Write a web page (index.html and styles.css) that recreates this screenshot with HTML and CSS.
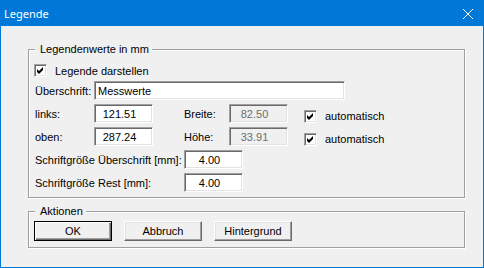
FILE: index.html
```html
<!DOCTYPE html>
<html>
<head>
  <meta charset="UTF-8">
  <meta name="viewport" content="width=device-width, initial-scale=1">
  <title>Legende</title>
  <link rel="stylesheet" href="styles.css">
</head>
<body>
  <div class="window">
    <div class="titlebar">
      <span class="caption">Legende</span>
      <svg class="close" width="10" height="10" viewBox="0 0 10 10"><path d="M0 0L10 10M10 0L0 10" stroke="#fff" stroke-width="1"/></svg>
    </div>
    <div class="client">
      <fieldset class="group values">
        <legend>Legendenwerte in mm</legend>
        <div class="rows">
          <div class="check-row">
            <span class="box"><svg width="9" height="9" viewBox="0 0 9 9"><path d="M1 3L3 5L7 1L7 4L3 8L1 6Z" fill="#000"/></svg></span>
            <span>Legende darstellen</span>
          </div>
          <div class="row">
            <span class="lbl">Überschrift:</span>
            <input class="edit wide" type="text" value="Messwerte">
          </div>
          <div class="row">
            <span class="lbl">links:</span>
            <input class="edit" type="text" value="121.51">
            <span class="lbl dim">Breite:</span>
            <input class="edit off" type="text" value="82.50" readonly>
            <span class="auto">
              <span class="box"><svg width="9" height="9" viewBox="0 0 9 9"><path d="M1 3L3 5L7 1L7 4L3 8L1 6Z" fill="#000"/></svg></span>
              <span>automatisch</span>
            </span>
          </div>
          <div class="row">
            <span class="lbl">oben:</span>
            <input class="edit" type="text" value="287.24">
            <span class="lbl dim">Höhe:</span>
            <input class="edit off" type="text" value="33.91" readonly>
            <span class="auto">
              <span class="box"><svg width="9" height="9" viewBox="0 0 9 9"><path d="M1 3L3 5L7 1L7 4L3 8L1 6Z" fill="#000"/></svg></span>
              <span>automatisch</span>
            </span>
          </div>
          <div class="row">
            <span class="lbl long">Schriftgröße Überschrift [mm]:</span>
            <input class="edit" type="text" value="4.00">
          </div>
          <div class="row">
            <span class="lbl long">Schriftgröße Rest [mm]:</span>
            <input class="edit" type="text" value="4.00">
          </div>
        </div>
      </fieldset>
      <fieldset class="group actions">
        <legend>Aktionen</legend>
        <div class="buttons">
          <button class="btn default">OK</button>
          <button class="btn">Abbruch</button>
          <button class="btn">Hintergrund</button>
        </div>
      </fieldset>
    </div>
  </div>
</body>
</html>
```

FILE: styles.css
```css
body {
  margin: 0;
  font-family: "Liberation Sans", Arial, sans-serif;
  font-size: 11px;
  color: #000000;
}
.window {
  width: 484px;
  height: 268px;
  box-sizing: border-box;
  border: 1px solid #0078d7;
  background: #f0f0f0;
}
.titlebar {
  height: 25px;
  display: flex;
  align-items: center;
  justify-content: space-between;
  padding: 0 10px 0 3px;
  background: #0078d7;
  color: #ffffff;
  font-family: "Noto Sans", sans-serif;
  font-size: 11px;
}
.close {
  display: block;
}
.client {
  padding-left: 27px;
}
.group {
  box-sizing: border-box;
  width: 437px;
  min-width: 0;
  margin: 0;
  border: 1px solid #a0a0a0;
  box-shadow: inset 1px 1px #ffffff, 1px 1px #ffffff;
}
.group legend {
  padding: 0 3px 0 5px;
  line-height: 13px;
  background: #f0f0f0;
}
.values {
  margin-top: 17px;
  padding: 8px 0 5px 6px;
}
.actions {
  margin-top: 7px;
  padding: 3px 0 6px 5px;
}
.actions legend {
  margin-left: 1px;
}
.rows {
  display: flex;
  flex-direction: column;
  gap: 4px;
}
.check-row {
  height: 13px;
  display: flex;
  align-items: center;
  margin-left: -1px;
}
.box {
  box-sizing: border-box;
  width: 13px;
  height: 13px;
  flex: none;
  padding: 1px;
  margin-right: 8px;
  border: 1px solid;
  border-color: #a0a0a0 #ffffff #ffffff #a0a0a0;
  box-shadow: inset 1px 1px #696969, inset -1px -1px #e3e3e3;
  background: #ffffff;
}
.box svg {
  display: block;
}
.row {
  height: 19px;
  display: flex;
  align-items: center;
}
.lbl {
  width: 59px;
  flex: none;
}
.lbl.long {
  width: 149px;
}
.lbl.dim {
  width: 45px;
  margin-left: 31px;
}
.edit {
  box-sizing: border-box;
  width: 59px;
  height: 19px;
  flex: none;
  margin: 0;
  padding: 0 10px 0 2px;
  border: 1px solid;
  border-color: #a0a0a0 #ffffff #ffffff #a0a0a0;
  box-shadow: inset 1px 1px #696969, inset -1px -1px #e3e3e3;
  background: #ffffff;
  font: inherit;
  color: #000000;
  text-align: center;
  outline: none;
}
.edit.wide {
  width: 251px;
  padding: 0 3px;
  text-align: left;
}
.edit.off {
  background: #f0f0f0;
  color: #6d6d6d;
}
.auto {
  display: flex;
  align-items: center;
  margin: 5px 0 0 16px;
}
.buttons {
  display: flex;
  gap: 12px;
}
.btn {
  box-sizing: border-box;
  width: 78px;
  height: 20px;
  margin: 0;
  padding: 0;
  border: 1px solid;
  border-color: #ffffff #696969 #696969 #ffffff;
  box-shadow: inset -1px -1px #a0a0a0, inset 1px 1px #e3e3e3;
  background: #f0f0f0;
  font: inherit;
  color: #000000;
}
.btn.default {
  border-color: #000000;
  box-shadow: inset 1px 1px #ffffff, inset -1px -1px #696969, inset -2px -2px #a0a0a0;
}
```
